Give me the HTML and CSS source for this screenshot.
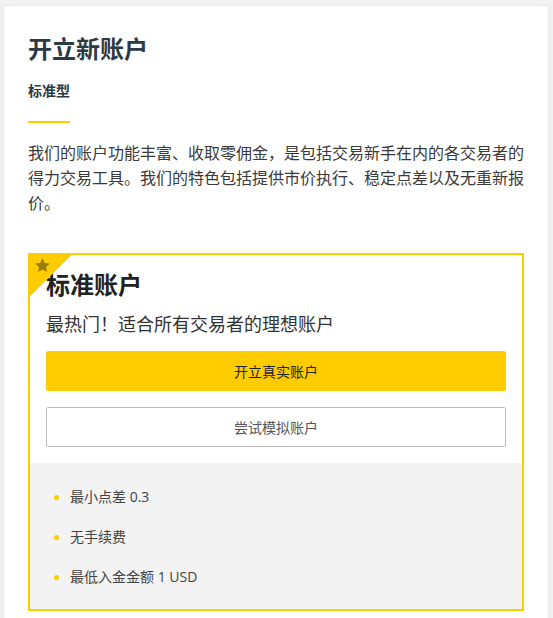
FILE: index.html
```html
<!DOCTYPE html>
<html lang="zh-CN">
<head>
<meta charset="utf-8">
<title>开立新账户</title>
<link rel="stylesheet" href="styles.css">
</head>
<body>
<div class="card">
  <h1 class="title">开立新账户</h1>
  <div class="subtitle">标准型</div>
  <div class="rule"></div>
  <p class="intro">我们的账户功能丰富、收取零佣金，是包括交易新手在内的各交易者的得力交易工具。我们的特色包括提供市价执行、稳定点差以及无重新报价。</p>

  <div class="plan">
    <div class="corner">
      <svg class="star" viewBox="0 0 24 24" width="17" height="17"><path d="M12 1.8l3.1 6.5 7.1.9-5.2 4.9 1.3 7.1L12 17.8l-6.3 3.4 1.3-7.1L1.8 9.2l7.1-.9z" fill="#9a7c00"/></svg>
    </div>
    <div class="plan-head">
      <h2 class="plan-name">标准账户</h2>
      <div class="plan-tag">最热门！适合所有交易者的理想账户</div>
      <a class="btn btn-primary">开立真实账户</a>
      <a class="btn btn-outline">尝试模拟账户</a>
    </div>
    <ul class="features">
      <li>最小点差 0.3</li>
      <li>无手续费</li>
      <li>最低入金金额 1 USD</li>
    </ul>
  </div>
</div>
</body>
</html>
```

FILE: styles.css
```css
html, body {
  margin: 0;
  padding: 0;
}
body {
  background: #f2f2f2;
  font-family: "Noto Sans CJK SC", "Noto Sans", sans-serif;
  color: #333;
  overflow: hidden;
}
.card {
  margin: 6px 5px 0 4px;
  background: #fff;
  border-radius: 4px;
  box-shadow: 0 0 4px rgba(0, 0, 0, 0.06);
  padding: 24px 24px 40px;
}
.title {
  margin: 0;
  font-size: 24px;
  line-height: 36px;
  font-weight: 700;
  color: #2d3944;
}
.subtitle {
  margin-top: 14px;
  font-size: 14px;
  line-height: 20px;
  font-weight: 700;
  color: #2d3944;
}
.rule {
  margin-top: 21px;
  width: 42px;
  height: 2px;
  background: #ffcc00;
}
.intro {
  margin: 17px 0 0;
  font-size: 16px;
  line-height: 25px;
  color: #3a3a3a;
}
.plan {
  position: relative;
  margin-top: 38px;
  border: 2px solid #ffcc00;
}
.corner {
  position: absolute;
  left: 0;
  top: 0;
  width: 42px;
  height: 42px;
  background: linear-gradient(135deg, #ffcc00 50%, transparent 50%);
}
.star {
  position: absolute;
  left: 4px;
  top: 2px;
}
.plan-head {
  padding: 11px 16px 0;
}
.plan-name {
  margin: 0;
  font-size: 24px;
  line-height: 36px;
  font-weight: 700;
  color: #222;
}
.plan-tag {
  margin-top: 8px;
  font-family: "Noto Sans CJK TC", "Noto Sans CJK SC", sans-serif;
  font-size: 18px;
  line-height: 27px;
  color: #333;
}
.btn {
  display: flex;
  align-items: center;
  justify-content: center;
  height: 40px;
  box-sizing: border-box;
  border-radius: 2px;
  font-size: 14px;
  cursor: pointer;
}
.btn-primary {
  margin-top: 14px;
  background: #ffcc00;
  color: #222;
}
.btn-outline {
  margin-top: 16px;
  border: 1px solid #bdbdbd;
  color: #555;
}
.features {
  list-style: none;
  margin: 16px 0 0;
  padding: 14px 0 12px;
  background: #f3f3f3;
}
.features li {
  position: relative;
  padding: 10px 0 10px 40px;
  font-family: "Open Sans", "Noto Sans CJK SC", sans-serif;
  font-size: 14px;
  line-height: 20px;
  color: #444;
}
.features li::before {
  content: "";
  position: absolute;
  left: 24px;
  top: 18px;
  width: 5px;
  height: 5px;
  border-radius: 50%;
  background: #ffcc00;
}
```
